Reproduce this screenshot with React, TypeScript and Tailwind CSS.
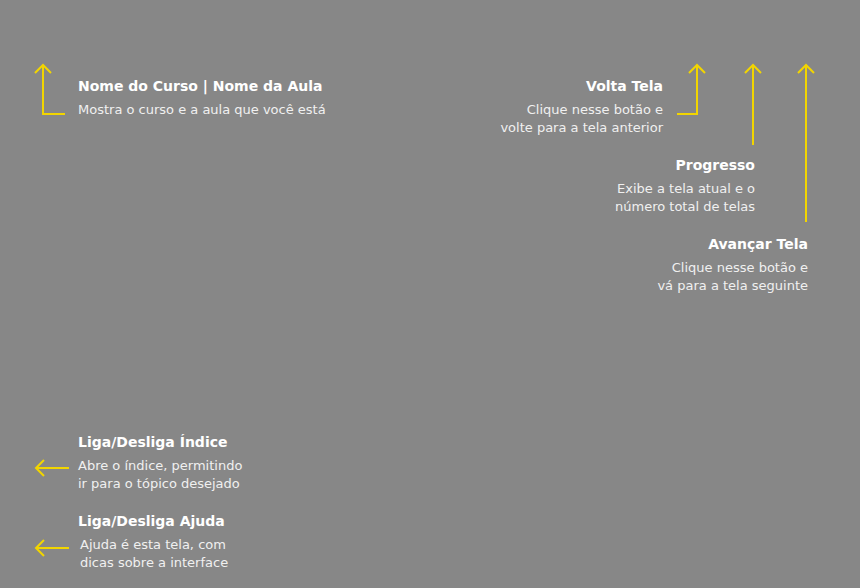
import React from "react";

// --- Help overlay: callouts pointing at the player's controls ---

interface CalloutProps {
  title: string;
  lines: string[];
  align?: "left" | "right";
  className?: string;
  bodyClassName?: string;
}

const Callout: React.FC<CalloutProps> = ({
  title,
  lines,
  align = "left",
  className = "",
  bodyClassName = "",
}) => (
  <div className={`${align === "right" ? "text-right" : "text-left"} ${className}`}>
    <p className="text-[14px] leading-[16px] font-bold text-white">{title}</p>
    <div className={`mt-[7px] text-[13px] leading-[18px] text-[#f0f0f0] ${bodyClassName}`}>
      {lines.map((l) => (
        <p key={l}>{l}</p>
      ))}
    </div>
  </div>
);

// --- Arrows drawn over the canvas ---
const Arrows = () => (
  <svg
    className="absolute inset-0 pointer-events-none"
    width={860}
    height={588}
    viewBox="0 0 860 588"
    fill="none"
    stroke="#f2d500"
    strokeWidth={2}
  >
    {/* course / lesson name */}
    <path d="M43 65 V114 H65" />
    <path d="M35 73 L43 65 L51 73" />
    {/* back */}
    <path d="M697 65 V114 H677" />
    <path d="M689 73 L697 65 L705 73" />
    {/* progress */}
    <path d="M753 65 V145" />
    <path d="M745 73 L753 65 L761 73" />
    {/* next */}
    <path d="M806 65 V222" />
    <path d="M798 73 L806 65 L814 73" />
    {/* index */}
    <path d="M36 468 H69" />
    <path d="M44 460 L36 468 L44 476" />
    {/* help */}
    <path d="M36 548 H69" />
    <path d="M44 540 L36 548 L44 556" />
  </svg>
);

export default function App() {
  return (
    <div
      className="relative w-[860px] h-[588px] bg-[#878787] flex flex-col overflow-hidden"
      style={{ fontFamily: '"DejaVu Sans", Verdana, sans-serif' }}
    >
      <Arrows />

      {/* --- Top callouts --- */}
      <div className="flex justify-between pt-[78px] pl-[78px] pr-[52px]">
        <Callout
          title="Nome do Curso | Nome da Aula"
          lines={["Mostra o curso e a aula que você está"]}
        />
        <div className="flex flex-col items-end gap-[20px]">
          <Callout
            align="right"
            className="mr-[145px]"
            title="Volta Tela"
            lines={["Clique nesse botão e", "volte para a tela anterior"]}
          />
          <Callout
            align="right"
            className="mr-[53px]"
            title="Progresso"
            lines={["Exibe a tela atual e o", "número total de telas"]}
          />
          <Callout
            align="right"
            title="Avançar Tela"
            lines={["Clique nesse botão e", "vá para a tela seguinte"]}
          />
        </div>
      </div>

      {/* --- Bottom callouts --- */}
      <div className="mt-auto flex flex-col gap-[20px] pl-[78px] pb-[16px]">
        <Callout
          title="Liga/Desliga Índice"
          lines={["Abre o índice, permitindo", "ir para o tópico desejado"]}
        />
        <Callout
          title="Liga/Desliga Ajuda"
          bodyClassName="pl-[2px]"
          lines={["Ajuda é esta tela, com", "dicas sobre a interface"]}
        />
      </div>
    </div>
  );
}
